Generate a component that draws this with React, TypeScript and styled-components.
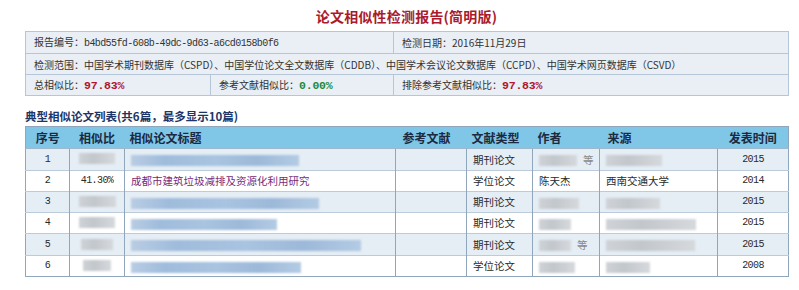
import styled, { createGlobalStyle } from "styled-components";

const GlobalStyle = createGlobalStyle`
  html, body {
    margin: 0;
    padding: 0;
    background: #ffffff;
  }
  body {
    font-family: "Noto Sans CJK SC", "Noto Sans", sans-serif;
    color: #2a2a2a;
  }
`;

const Page = styled.div`
  width: 763px;
  padding: 6px 0 0 25px;
`;

const Title = styled.h1`
  margin: 0 0 5px;
  height: 20px;
  line-height: 20px;
  text-align: center;
  font-size: 14px;
  font-weight: 700;
  color: #ab1a2c;
  letter-spacing: 0.2px;
`;

const InfoTable = styled.table`
  width: 763px;
  border-collapse: collapse;
  table-layout: fixed;
  background: #e9eff5;
  border: 1px solid #aabdd0;

  td {
    height: 20px;
    padding: 0 0 0 8px;
    border: 1px solid #b4c6d8;
    font-size: 10px;
    line-height: 19px;
    white-space: nowrap;
    overflow: hidden;
    color: #333;
  }
`;

const Mono = styled.span`
  font-family: "Liberation Mono", monospace;
  font-size: 10px;
  letter-spacing: -0.6px;
`;

const Rate = styled.span<{ $tone: "red" | "green" }>`
  font-family: "Liberation Mono", monospace;
  font-weight: 700;
  font-size: 11.5px;
  letter-spacing: -0.2px;
  color: ${(p) => (p.$tone === "red" ? "#b0142e" : "#1e8a3c")};
`;

const SectionTitle = styled.h2`
  margin: 12px 0 2px 0;
  height: 16px;
  line-height: 16px;
  font-size: 11.5px;
  font-weight: 700;
  color: #1d3566;
`;

const ResultTable = styled.table`
  width: 763px;
  border-collapse: collapse;
  table-layout: fixed;
  border: 1px solid #8fa6bd;
`;

const HeadCell = styled.th<{ $align?: "left" | "center"; $pad?: number }>`
  height: 21px;
  padding: 0 ${(p) => (p.$align === "center" ? 0 : p.$pad ?? 5)}px;
  background: #80c6e6;
  text-align: ${(p) => p.$align ?? "left"};
  font-size: 12px;
  font-weight: 700;
  color: #1b2a40;
  border-bottom: 1px solid #9fb8cc;
  white-space: nowrap;
`;

const Row = styled.tr<{ $shade: boolean }>`
  background: ${(p) => (p.$shade ? "#e5edf5" : "#ffffff")};
`;

const Cell = styled.td<{ $align?: "left" | "center"; $purple?: boolean; $mono?: boolean }>`
  height: 20px;
  padding: 0 ${(p) => (p.$align === "center" ? 0 : 6)}px;
  text-align: ${(p) => p.$align ?? "left"};
  font-size: ${(p) => (p.$mono ? 10 : 10.5)}px;
  letter-spacing: ${(p) => (p.$mono ? -0.6 : 0)}px;
  line-height: 20px;
  color: ${(p) => (p.$purple ? "#7a2a78" : "#2a2a2a")};
  font-family: ${(p) =>
    p.$mono ? `"Liberation Mono", monospace` : `"Noto Sans CJK SC", sans-serif`};
  border-top: 1px solid #bccbd9;
  border-left: 1px solid #8fa6bd;
  white-space: nowrap;
  overflow: hidden;

  &:first-child {
    border-left: none;
  }
`;

const Blur = styled.span<{ $w: number; $blue?: boolean }>`
  display: inline-block;
  vertical-align: middle;
  width: ${(p) => p.$w}px;
  height: 11px;
  background: ${(p) =>
    p.$blue
      ? "linear-gradient(90deg, #b9cde3 0%, #9fbcdc 20%, #a9c4e0 50%, #9db9d9 75%, #b3cbe4 100%)"
      : "linear-gradient(90deg, #cfd3d7 0%, #c2c7cc 40%, #d6d9dc 100%)"};
  filter: blur(1.2px);
`;

const Etc = styled.span`
  display: inline-block;
  margin-left: 6px;
  color: #8a8a8a;
  font-size: 10.5px;
  vertical-align: middle;
`;

type Paper = {
  no: number;
  rate?: string;
  rateBlur: number;
  title?: string;
  titleBlur: number;
  type: string;
  author?: string;
  authorBlur: number;
  etc?: boolean;
  source?: string;
  sourceBlur: number;
  year: string;
};

const papers: Paper[] = [
  { no: 1, rateBlur: 36, titleBlur: 168, type: "期刊论文", authorBlur: 38, etc: true, sourceBlur: 56, year: "2015" },
  {
    no: 2,
    rate: "41.30%",
    rateBlur: 0,
    title: "成都市建筑垃圾减排及资源化利用研究",
    titleBlur: 0,
    type: "学位论文",
    author: "陈天杰",
    authorBlur: 0,
    source: "西南交通大学",
    sourceBlur: 0,
    year: "2014",
  },
  { no: 3, rateBlur: 37, titleBlur: 188, type: "期刊论文", authorBlur: 40, sourceBlur: 54, year: "2015" },
  { no: 4, rateBlur: 36, titleBlur: 146, type: "期刊论文", authorBlur: 32, sourceBlur: 90, year: "2015" },
  { no: 5, rateBlur: 32, titleBlur: 230, type: "期刊论文", authorBlur: 32, etc: true, sourceBlur: 89, year: "2015" },
  { no: 6, rateBlur: 28, titleBlur: 170, type: "学位论文", authorBlur: 36, sourceBlur: 44, year: "2008" },
];

const App = () => {
  return (
    <Page>
      <GlobalStyle />
      <Title>论文相似性检测报告(简明版)</Title>

      <InfoTable>
        <colgroup>
          <col style={{ width: 185 }} />
          <col style={{ width: 183 }} />
          <col style={{ width: 395 }} />
        </colgroup>
        <tbody>
          <tr>
            <td colSpan={2}>
              报告编号：<Mono>b4bd55fd-608b-49dc-9d63-a6cd0158b0f6</Mono>
            </td>
            <td>检测日期：2016年11月29日</td>
          </tr>
          <tr>
            <td colSpan={3}>
              检测范围：中国学术期刊数据库（CSPD）、中国学位论文全文数据库（CDDB）、中国学术会议论文数据库（CCPD）、中国学术网页数据库（CSVD）
            </td>
          </tr>
          <tr>
            <td>
              总相似比：<Rate $tone="red">97.83%</Rate>
            </td>
            <td>
              参考文献相似比：<Rate $tone="green">0.00%</Rate>
            </td>
            <td>
              排除参考文献相似比：<Rate $tone="red">97.83%</Rate>
            </td>
          </tr>
        </tbody>
      </InfoTable>

      <SectionTitle>典型相似论文列表(共6篇，最多显示10篇)</SectionTitle>

      <ResultTable>
        <colgroup>
          <col style={{ width: 44 }} />
          <col style={{ width: 55 }} />
          <col style={{ width: 271 }} />
          <col style={{ width: 71 }} />
          <col style={{ width: 66 }} />
          <col style={{ width: 67 }} />
          <col style={{ width: 118 }} />
          <col style={{ width: 71 }} />
        </colgroup>
        <thead>
          <tr>
            <HeadCell $align="center">序号</HeadCell>
            <HeadCell $align="center">相似比</HeadCell>
            <HeadCell>相似论文标题</HeadCell>
            <HeadCell $pad={7}>参考文献</HeadCell>
            <HeadCell>文献类型</HeadCell>
            <HeadCell>作者</HeadCell>
            <HeadCell $pad={8}>来源</HeadCell>
            <HeadCell $align="center">发表时间</HeadCell>
          </tr>
        </thead>
        <tbody>
          {papers.map((p) => (
            <Row key={p.no} $shade={p.no % 2 === 1}>
              <Cell $align="center" $mono>
                {p.no}
              </Cell>
              <Cell $align="center" $mono>
                {p.rate ?? <Blur $w={p.rateBlur} />}
              </Cell>
              <Cell $purple>{p.title ?? <Blur $w={p.titleBlur} $blue />}</Cell>
              <Cell />
              <Cell>{p.type}</Cell>
              <Cell>
                {p.author ?? <Blur $w={p.authorBlur} />}
                {p.etc && <Etc>等</Etc>}
              </Cell>
              <Cell>{p.source ?? <Blur $w={p.sourceBlur} />}</Cell>
              <Cell $align="center" $mono>
                {p.year}
              </Cell>
            </Row>
          ))}
        </tbody>
      </ResultTable>
    </Page>
  );
};

export default App;
